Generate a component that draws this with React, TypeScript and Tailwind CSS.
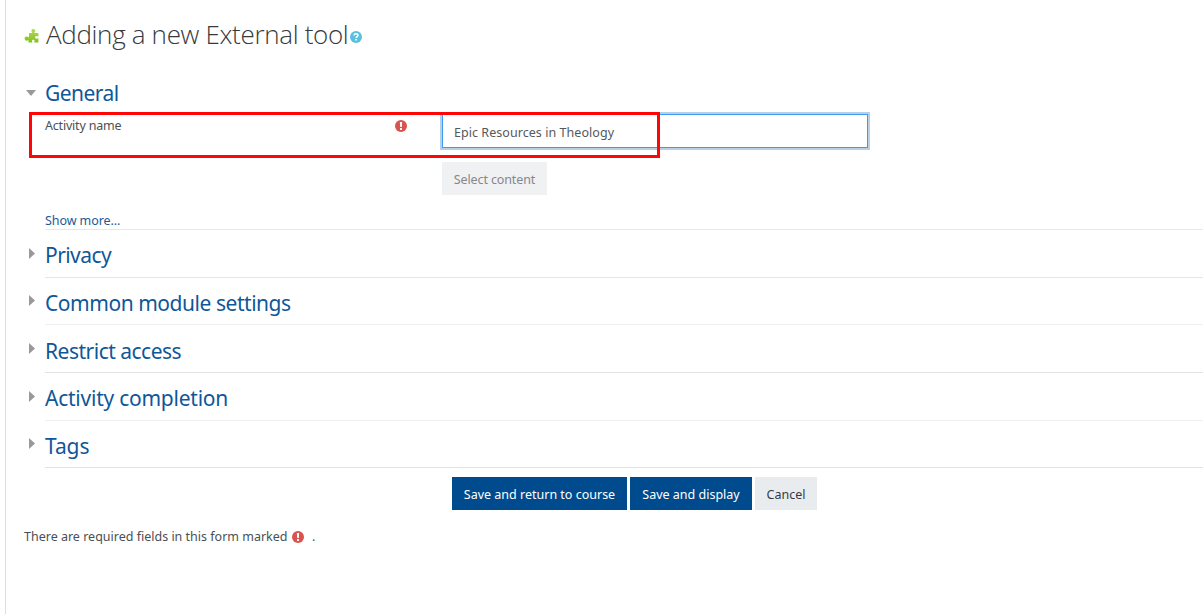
import React from "react";

const sections = [
  { title: "Privacy", box: "h-12 border-[#e6e6e6] pt-[3px]", text: "tracking-[-0.57px]" },
  { title: "Common module settings", box: "h-[47px] border-[#f0f0f0] pt-1", text: "tracking-[-0.46px]" },
  { title: "Restrict access", box: "h-12 border-[#e3e3e3] pt-1", text: "tracking-[-0.5px]" },
  { title: "Activity completion", box: "h-12 border-[#f0f0f0] pt-0.5", text: "tracking-[-0.24px]" },
  { title: "Tags", box: "h-[47px] border-[#e3e3e3] pt-1", text: "tracking-[-0.1px]" },
];

function Required() {
  return (
    <svg className="size-3 shrink-0" viewBox="0 0 12 12" role="img" aria-label="Required">
      <circle cx="6" cy="6" r="6" fill="#d9534f" />
      <path d="M4.9 1.9h2.2L6.8 7H5.2Z" fill="#fff" />
      <rect x="5" y="8" width="2" height="2" rx=".3" fill="#fff" />
    </svg>
  );
}

function Puzzle() {
  return (
    <svg className="h-4 w-4 shrink-0" viewBox="0 0 16 16" aria-hidden="true">
      <defs>
        <linearGradient id="leaf" x1="0" y1="0" x2="0" y2="1">
          <stop offset="0" stopColor="#b5dc55" />
          <stop offset="1" stopColor="#7fc21a" />
        </linearGradient>
      </defs>
      <path
        d="M5 5.1H8.3C8.5 4.3 7.4 4 7.4 2.7C7.4 1.5 8.2.9 9.3.9S11.3 1.6 11.3 2.7C11.3 3.9 10.2 4.3 10.4 5.1H14.4V8.4C13.6 8.6 13.2 8 12.4 8C11.6 8 11.2 8.6 11.2 9.3S11.6 10.7 12.4 10.7C13.2 10.7 13.6 10.2 14.4 10.4V14.6H10.4C10.1 13.8 10.6 13.5 10.6 12.8C10.6 12.1 10 11.7 9.3 11.7S7.9 12.1 7.9 12.8C7.9 13.5 8.4 13.8 8.2 14.6H4.4V12C4 11.7 3.6 12.7 2.5 12.7C1.4 12.7.6 11.8.6 10.6S1.4 8.5 2.5 8.5C3.6 8.5 4 9.4 5 9.2Z"
        fill="url(#leaf)"
      />
    </svg>
  );
}

function Help() {
  return (
    <svg className="size-3 shrink-0" viewBox="0 0 12 12" role="img" aria-label="Help">
      <circle cx="6" cy="6" r="6" fill="#5bc0de" />
      <path d="M4 4.5C4.2 3.2 5 2.8 6 2.8C7.2 2.8 7.9 3.5 7.9 4.4C7.9 5.6 6.1 5.6 6.1 7" fill="none" stroke="#fff" strokeWidth="1.5" />
      <rect x="5.2" y="7.9" width="1.7" height="1.6" fill="#fff" />
    </svg>
  );
}

export default function App() {
  return (
    <div className="flex h-[614px] w-full overflow-hidden bg-white pl-[5px] font-['Noto_Sans','Open_Sans',sans-serif] text-[12.5px] leading-5 text-[#4b4f54]">
      <main className="flex min-w-0 flex-1 flex-col border-l border-[#dedede] pl-[18px]">
        <header className="flex h-[70px] items-start pt-[15px]">
          <div className="mt-[13px] w-[22px]">
            <Puzzle />
          </div>
          <h1 className="w-[303px] whitespace-nowrap font-['Open_Sans',sans-serif] text-[26px] font-light leading-[38px] tracking-[-0.33px] text-[#373a3c]">
            Adding a new External tool
          </h1>
          <div className="mt-4 pl-px">
            <Help />
          </div>
        </header>

        <section className="relative flex h-[160px] flex-col">
          <div className="flex h-[43px] items-center pt-[3px]">
            <svg className="ml-[2px] mr-[9px] h-1.5 w-2.5" viewBox="0 0 10 6" aria-hidden="true">
              <path d="M0 0H10L5 6Z" fill="#999" />
            </svg>
            <h2 className="text-[21px] leading-[30px] tracking-[-0.55px] text-[#0f5799]">General</h2>
          </div>
          <div className="flex h-[37px]">
            <div className="flex h-[26px] w-[395px] items-center justify-between pl-[21px] pr-[12px] pt-px">
              <label htmlFor="activity" className="whitespace-nowrap pt-px tracking-[-0.2px]">Activity name</label>
              <Required />
            </div>
            <input
              id="activity"
              className="ml-[23px] mt-0.5 h-[34px] w-[426px] border border-[#3b9cf5] px-[11px] pb-0 pt-[3px] text-[12.5px] tracking-[0.05px] text-[#55595c] outline-2 outline-[#b9cfe3]"
              defaultValue="Epic Resources in Theology"
            />
          </div>
          <div className="pl-[418px] pt-[13px]">
            <button className="h-[33px] w-[105px] whitespace-nowrap bg-[#f0f1f3] pt-[3px] tracking-[-0.12px] text-[#85888b]">Select content</button>
          </div>
          <a className="ml-[21px] mt-4 block h-[19px] shrink-0 whitespace-nowrap border-b border-[#e8e8e8] leading-[19px] tracking-[-0.08px] text-[#1c5a96]">
            Show more...
          </a>
          <div className="pointer-events-none absolute left-[5px] top-[42px] h-[46px] w-[631px] border-3 border-[#ff0505]" />
        </section>

        {sections.map((s) => (
          <section key={s.title} className="flex items-stretch">
            <div className="flex w-[21px] items-center pb-0.5 pl-[5px]">
              <svg className="h-[11px] w-1.5" viewBox="0 0 6 11" aria-hidden="true">
                <path d="M0 0L6 5.5L0 11Z" fill="#999" />
              </svg>
            </div>
            <div className={`flex flex-1 items-center border-b ${s.box}`}>
              <h2 className={`whitespace-nowrap text-[21px] leading-[30px] text-[#0f5799] ${s.text}`}>{s.title}</h2>
            </div>
          </section>
        ))}

        <div className="flex gap-[3px] pl-[428px] pt-[9px] text-white">
          <button className="h-[33px] w-[175px] whitespace-nowrap bg-[#004b8d] pt-0.5">Save and return to course</button>
          <button className="h-[33px] w-[122px] whitespace-nowrap bg-[#004b8d] pt-0.5">Save and display</button>
          <button className="h-[33px] w-[62px] whitespace-nowrap bg-[#e9ecef] pt-0.5 text-[#373a3c]">Cancel</button>
        </div>
        <p className="flex items-center pt-[17px]">
          <span className="w-[268px] whitespace-nowrap">There are required fields in this form marked</span>
          <Required />
          <span className="pl-2">.</span>
        </p>
      </main>
    </div>
  );
}
